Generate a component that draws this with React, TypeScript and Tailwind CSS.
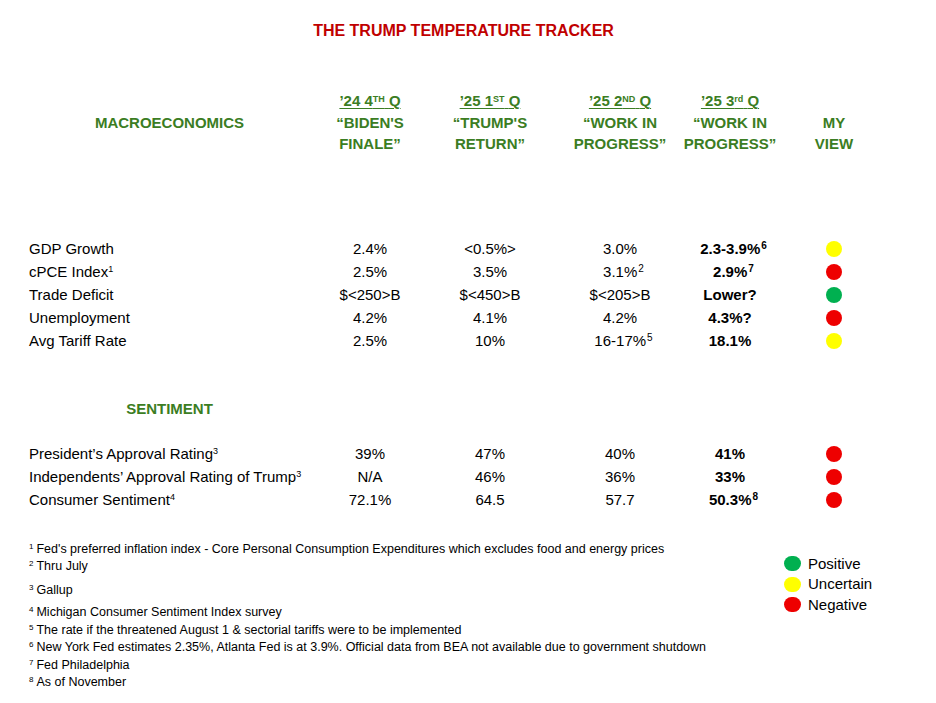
const GREEN = 'text-[#3b7d23]';

type Dot = 'red' | 'yellow' | 'green';

const dotClass: Record<Dot, string> = {
  red: 'bg-[#ee0000]',
  yellow: 'bg-[#ffff00]',
  green: 'bg-[#00b050]',
};

// superscript that doesn't take part in centring
function Sup({ n }: { n: string }) {
  return <sup className="text-[10px] ml-[1px] -mr-[7px]">{n}</sup>;
}

function Row({
  label,
  vals,
  dot,
}: {
  label: React.ReactNode;
  vals: React.ReactNode[];
  dot: Dot;
}) {
  const widths = ['w-[120px]', 'w-[120px]', 'w-[140px]', 'w-[80px]'];
  return (
    <div className="flex items-center h-[23px] text-[15px] text-black">
      <div className="w-[281px] whitespace-nowrap">{label}</div>
      {vals.map((v, i) => (
        <div key={i} className={`${widths[i]} flex justify-center whitespace-nowrap ${i === 3 ? 'font-bold' : ''}`}>
          <span>{v}</span>
        </div>
      ))}
      <div className="w-[128px] flex justify-center">
        <span className={`w-4 h-4 rounded-full ${dotClass[dot]}`} />
      </div>
    </div>
  );
}

function HeadCol({ top, sup, tail, l2, l3, w }: { top: string; sup: string; tail: string; l2: string; l3: string; w: string }) {
  return (
    <div className={`${w} flex flex-col items-center whitespace-nowrap`}>
      <span className="underline underline-offset-2 decoration-1">
        {top}
        <sup className="text-[9px]">{sup}</sup> {tail}
      </span>
      <span>{l2}</span>
      <span>{l3}</span>
    </div>
  );
}

const footnotes = [
  { n: '1', t: "Fed's preferred inflation index - Core Personal Consumption Expenditures which excludes food and energy prices", mt: '' },
  { n: '2', t: 'Thru July', mt: '' },
  { n: '3', t: 'Gallup', mt: 'mt-[6px]' },
  { n: '4', t: 'Michigan Consumer Sentiment Index survey', mt: 'mt-[5px]' },
  { n: '5', t: 'The rate if the threatened August 1 & sectorial tariffs were to be implemented', mt: '' },
  { n: '6', t: 'New York Fed estimates 2.35%, Atlanta Fed is at 3.9%. Official data from BEA not available due to government shutdown', mt: '' },
  { n: '7', t: 'Fed Philadelphia', mt: '' },
  { n: '8', t: 'As of November', mt: '' },
];

export default function App() {
  return (
    <div className="w-[936px] h-[703px] bg-white overflow-hidden pl-[29px] font-['Liberation_Sans',Arial,sans-serif] text-black">
      {/* Title */}
      <div className="pt-[21px] h-[41px] pr-[38px] text-center text-[16px] leading-[20px] font-bold text-[#c00000]">
        THE TRUMP TEMPERATURE TRACKER
      </div>

      {/* Column headers */}
      <div className={`mt-[49px] flex items-start text-[15px] leading-[21.5px] font-bold ${GREEN}`}>
        <div className="w-[281px] mt-[21.5px] flex justify-center">MACROECONOMICS</div>
        <HeadCol w="w-[120px]" top="’24 4" sup="TH" tail="Q" l2="“BIDEN'S" l3="FINALE”" />
        <HeadCol w="w-[120px]" top="’25 1" sup="ST" tail="Q" l2="“TRUMP'S" l3="RETURN”" />
        <HeadCol w="w-[140px]" top="’25 2" sup="ND" tail="Q" l2="“WORK IN" l3="PROGRESS”" />
        <HeadCol w="w-[80px]" top="’25 3" sup="rd" tail="Q" l2="“WORK IN" l3="PROGRESS”" />
        <div className="w-[128px] mt-[21.5px] flex flex-col items-center">
          <span>MY</span>
          <span>VIEW</span>
        </div>
      </div>

      {/* Macro rows */}
      <div className="mt-[83px]">
        <Row label="GDP Growth" vals={['2.4%', '<0.5%>', '3.0%', <>2.3-3.9%<Sup n="6" /></>]} dot="yellow" />
        <Row label={<>cPCE Index<sup className="text-[9px]">1</sup></>} vals={['2.5%', '3.5%', <>3.1%<Sup n="2" /></>, <>2.9%<Sup n="7" /></>]} dot="red" />
        <Row label="Trade Deficit" vals={['$<250>B', '$<450>B', '$<205>B', 'Lower?']} dot="green" />
        <Row label="Unemployment" vals={['4.2%', '4.1%', '4.2%', '4.3%?']} dot="red" />
        <Row label="Avg Tariff Rate" vals={['2.5%', '10%', <>16-17%<Sup n="5" /></>, '18.1%']} dot="yellow" />
      </div>

      {/* Sentiment */}
      <div className={`mt-[45px] h-[23px] w-[281px] flex items-center justify-center text-[15px] font-bold ${GREEN}`}>
        SENTIMENT
      </div>
      <div className="mt-[22px]">
        <Row label={<>President’s Approval Rating<sup className="text-[9px]">3</sup></>} vals={['39%', '47%', '40%', '41%']} dot="red" />
        <Row label={<>Independents’ Approval Rating of Trump<sup className="text-[9px]">3</sup></>} vals={['N/A', '46%', '36%', '33%']} dot="red" />
        <Row label={<>Consumer Sentiment<sup className="text-[9px]">4</sup></>} vals={['72.1%', '64.5', '57.7', <>50.3%<Sup n="8" /></>]} dot="red" />
      </div>

      {/* Footnotes + legend */}
      <div className="mt-[29px] flex">
        <div className="w-[755px] text-[12.5px] leading-[17.5px]">
          {footnotes.map((f) => (
            <div key={f.n} className={`whitespace-nowrap ${f.mt}`}>
              <sup className="text-[8px] mr-[3px]">{f.n}</sup>
              {f.t}
            </div>
          ))}
        </div>
        <div className="mt-[13px] flex flex-col text-[15px] leading-[20.5px]">
          {[
            ['green', 'Positive'],
            ['yellow', 'Uncertain'],
            ['red', 'Negative'],
          ].map(([c, t]) => (
            <div key={t} className="flex items-center gap-[7px]">
              <span className={`w-[17px] h-[15px] rounded-full ${dotClass[c as Dot]}`} />
              <span>{t}</span>
            </div>
          ))}
        </div>
      </div>
    </div>
  );
}
